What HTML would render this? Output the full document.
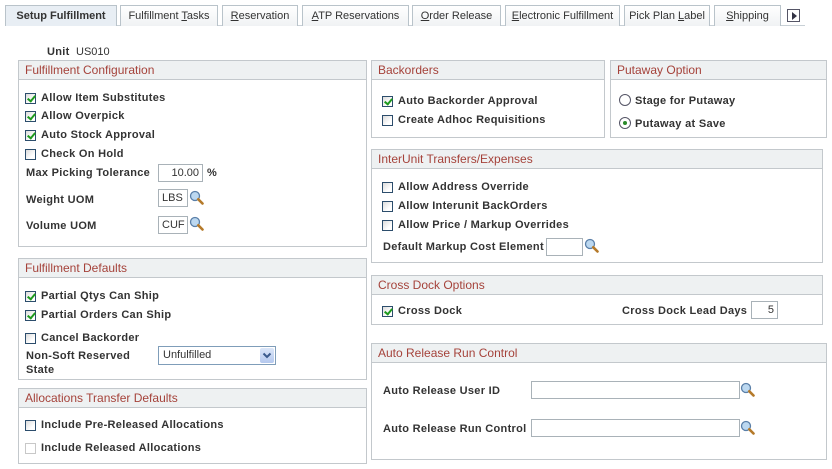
<!DOCTYPE html>
<html><head><meta charset="utf-8">
<style>
*{box-sizing:border-box;margin:0;padding:0}
body{width:832px;height:469px;background:#fff;position:relative;overflow:hidden;font-family:"Liberation Sans",Arial,sans-serif;font-size:11px;color:#333}
.a{position:absolute}
.tab{position:absolute;top:5px;height:21px;border:1px solid #b9c3ca;border-bottom:none;background:linear-gradient(#fff,#f0f2f4);font-size:11px;color:#333;text-align:center;line-height:20px;white-space:nowrap}
.tab.on{background:#e8eef4;font-weight:bold;color:#333}
.box{position:absolute;border:1px solid #c3c8cc}
.hd{position:absolute;left:0;right:0;top:0;height:19px;background:#eef1f2;border-bottom:1px solid #c3c8cc;color:#a5423a;font-size:12px;line-height:18px;padding-left:6px;white-space:nowrap}
.l{position:absolute;font-weight:bold;font-size:11px;line-height:13px;white-space:nowrap;color:#333;letter-spacing:0.3px;margin-top:1px}
.cb{position:absolute;width:11px;height:11px;border:1px solid #2c4d6c;background:linear-gradient(135deg,#dcdcdc,#fff 70%);margin-top:2px;margin-left:-1px}
.cb.ck::after{content:"";position:absolute;left:3px;top:0px;width:3px;height:6px;border:solid #1d9a1d;border-width:0 2px 2px 0;transform:rotate(40deg)}
.cb.dis{border-color:#c8c8c8;background:#fff}
.in{position:absolute;height:18px;border:1px solid #a9b2b8;background:#fff;font-size:11px;line-height:16px;padding:0 3px;color:#333}
.rd{position:absolute;width:12px;height:12px;border:1px solid #556;border-radius:50%;background:#fff}
.rd.on::after{content:"";position:absolute;left:3px;top:3px;width:4px;height:4px;border-radius:50%;background:#2a8a2a}
.lk{position:absolute;width:15px;height:15px}
u{text-decoration:underline}
</style></head><body>
<div class="a" style="left:5px;top:25px;width:800px;height:1px;background:#c8d0d6"></div>
<div class="tab on" style="left:5px;width:112px">Setup Fulfillment</div>
<div class="tab" style="left:120px;width:98px">Fulfillment <u>T</u>asks</div>
<div class="tab" style="left:222px;width:76px"><u>R</u>eservation</div>
<div class="tab" style="left:302px;width:107px"><u>A</u>TP Reservations</div>
<div class="tab" style="left:412px;width:89px"><u>O</u>rder Release</div>
<div class="tab" style="left:505px;width:115px"><u>E</u>lectronic Fulfillment</div>
<div class="tab" style="left:624px;width:86px">Pick Plan <u>L</u>abel</div>
<div class="tab" style="left:714px;width:67px"><u>S</u>hipping</div>
<div class="a" style="left:787px;top:9px;width:13px;height:13px;border:1px solid #556;background:#fff"><div class="a" style="left:4px;top:2px;width:0;height:0;border-left:5px solid #334;border-top:4px solid transparent;border-bottom:4px solid transparent"></div></div>

<div class="l" style="left:47px;top:45px">Unit</div>
<div class="a" style="left:76px;top:46px;line-height:13px">US010</div>

<div class="box" style="left:18px;top:60px;width:349px;height:187px"><div class="hd">Fulfillment Configuration</div></div>
<div class="cb ck" style="left:26px;top:91px"></div><div class="l" style="left:41px;top:91px">Allow Item Substitutes</div>
<div class="cb ck" style="left:26px;top:109px"></div><div class="l" style="left:41px;top:109px">Allow Overpick</div>
<div class="cb ck" style="left:26px;top:128px"></div><div class="l" style="left:41px;top:128px">Auto Stock Approval</div>
<div class="cb" style="left:26px;top:147px"></div><div class="l" style="left:41px;top:147px">Check On Hold</div>
<div class="l" style="left:26px;top:166px">Max Picking Tolerance</div>
<div class="in" style="left:158px;top:164px;width:45px;text-align:right">10.00</div>
<div class="l" style="left:207px;top:166px">%</div>
<div class="l" style="left:26px;top:193px">Weight UOM</div>
<div class="in" style="left:158px;top:189px;width:30px">LBS</div>
<svg class="lk" style="left:189px;top:190px" viewBox="0 0 15 15"><circle cx="6" cy="6" r="4.5" fill="#bcd8f0" stroke="#5a7fa8" stroke-width="1.3"/><path d="M9.3 9.3L13.5 13.5" stroke="#b57a2a" stroke-width="2.6" stroke-linecap="round"/></svg>
<div class="l" style="left:26px;top:219px">Volume UOM</div>
<div class="in" style="left:158px;top:216px;width:30px">CUF</div>
<svg class="lk" style="left:189px;top:216px" viewBox="0 0 15 15"><circle cx="6" cy="6" r="4.5" fill="#bcd8f0" stroke="#5a7fa8" stroke-width="1.3"/><path d="M9.3 9.3L13.5 13.5" stroke="#b57a2a" stroke-width="2.6" stroke-linecap="round"/></svg>

<div class="box" style="left:18px;top:258px;width:349px;height:122px"><div class="hd">Fulfillment Defaults</div></div>
<div class="cb ck" style="left:26px;top:289px"></div><div class="l" style="left:41px;top:289px">Partial Qtys Can Ship</div>
<div class="cb ck" style="left:26px;top:308px"></div><div class="l" style="left:41px;top:308px">Partial Orders Can Ship</div>
<div class="cb" style="left:26px;top:331px"></div><div class="l" style="left:41px;top:331px">Cancel Backorder</div>
<div class="l" style="left:26px;top:349px">Non-Soft Reserved</div>
<div class="l" style="left:26px;top:363px">State</div>
<div class="a" style="left:158px;top:346px;width:118px;height:19px;border:1px solid #7f9db9;background:#fff;line-height:17px;padding-left:4px;color:#333">Unfulfilled
<div class="a" style="right:1px;top:1px;width:14px;height:15px;background:linear-gradient(#dbe6f8,#b4c8ee);border-radius:2px"><svg width="14" height="15" viewBox="0 0 14 15"><path d="M3.5 5.5L7 9L10.5 5.5" fill="none" stroke="#3a5a8c" stroke-width="2"/></svg></div></div>

<div class="box" style="left:18px;top:388px;width:349px;height:76px"><div class="hd">Allocations Transfer Defaults</div></div>
<div class="cb" style="left:26px;top:418px"></div><div class="l" style="left:41px;top:418px">Include Pre-Released Allocations</div>
<div class="cb dis" style="left:26px;top:441px"></div><div class="l" style="left:41px;top:441px">Include Released Allocations</div>

<div class="box" style="left:371px;top:60px;width:234px;height:78px"><div class="hd">Backorders</div></div>
<div class="cb ck" style="left:383px;top:94px"></div><div class="l" style="left:398px;top:94px">Auto Backorder Approval</div>
<div class="cb" style="left:383px;top:113px"></div><div class="l" style="left:398px;top:113px">Create Adhoc Requisitions</div>

<div class="box" style="left:610px;top:60px;width:217px;height:78px"><div class="hd">Putaway Option</div></div>
<div class="rd" style="left:619px;top:94px"></div><div class="l" style="left:635px;top:94px">Stage for Putaway</div>
<div class="rd on" style="left:619px;top:117px"></div><div class="l" style="left:635px;top:117px">Putaway at Save</div>

<div class="box" style="left:371px;top:149px;width:452px;height:114px"><div class="hd">InterUnit Transfers/Expenses</div></div>
<div class="cb" style="left:383px;top:180px"></div><div class="l" style="left:398px;top:180px">Allow Address Override</div>
<div class="cb" style="left:383px;top:199px"></div><div class="l" style="left:398px;top:199px">Allow Interunit BackOrders</div>
<div class="cb" style="left:383px;top:218px"></div><div class="l" style="left:398px;top:218px">Allow Price / Markup Overrides</div>
<div class="l" style="left:383px;top:240px">Default Markup Cost Element</div>
<div class="in" style="left:546px;top:238px;width:37px"></div>
<svg class="lk" style="left:584px;top:238px" viewBox="0 0 15 15"><circle cx="6" cy="6" r="4.5" fill="#bcd8f0" stroke="#5a7fa8" stroke-width="1.3"/><path d="M9.3 9.3L13.5 13.5" stroke="#b57a2a" stroke-width="2.6" stroke-linecap="round"/></svg>

<div class="box" style="left:371px;top:275px;width:452px;height:50px"><div class="hd">Cross Dock Options</div></div>
<div class="cb ck" style="left:383px;top:304px"></div><div class="l" style="left:398px;top:304px">Cross Dock</div>
<div class="l" style="left:622px;top:304px">Cross Dock Lead Days</div>
<div class="in" style="left:751px;top:301px;width:27px;text-align:right">5</div>

<div class="box" style="left:371px;top:343px;width:456px;height:117px"><div class="hd">Auto Release Run Control</div></div>
<div class="l" style="left:383px;top:384px">Auto Release User ID</div>
<div class="in" style="left:531px;top:381px;width:209px"></div>
<svg class="lk" style="left:740px;top:382px" viewBox="0 0 15 15"><circle cx="6" cy="6" r="4.5" fill="#bcd8f0" stroke="#5a7fa8" stroke-width="1.3"/><path d="M9.3 9.3L13.5 13.5" stroke="#b57a2a" stroke-width="2.6" stroke-linecap="round"/></svg>
<div class="l" style="left:383px;top:422px">Auto Release Run Control</div>
<div class="in" style="left:531px;top:419px;width:209px"></div>
<svg class="lk" style="left:740px;top:420px" viewBox="0 0 15 15"><circle cx="6" cy="6" r="4.5" fill="#bcd8f0" stroke="#5a7fa8" stroke-width="1.3"/><path d="M9.3 9.3L13.5 13.5" stroke="#b57a2a" stroke-width="2.6" stroke-linecap="round"/></svg>
</body></html>
